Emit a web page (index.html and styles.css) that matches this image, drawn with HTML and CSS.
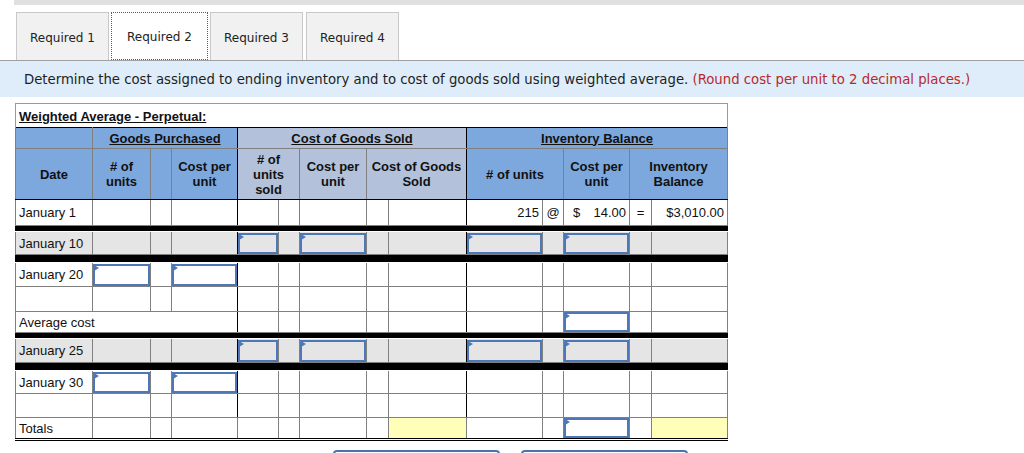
FILE: index.html
```html
<!DOCTYPE html>
<html>
<head>
<meta charset="utf-8">
<link rel="stylesheet" href="styles.css">
</head>
<body>
<div class="topbar"></div>
<div class="tabs">
  <div class="tab">Required 1</div>
  <div class="tab active">Required 2</div>
  <div class="tab">Required 3</div>
  <div class="tab">Required 4</div>
</div>
<div class="instr">Determine the cost assigned to ending inventory and to cost of goods sold using weighted average. <span class="red">(Round cost per unit to 2 decimal places.)</span></div>

<table class="wa">
  <colgroup>
    <col style="width:77px"><col style="width:58px"><col style="width:21px"><col style="width:66px">
    <col style="width:41px"><col style="width:21px"><col style="width:67px"><col style="width:22px"><col style="width:78px">
    <col style="width:76px"><col style="width:21px"><col style="width:66px"><col style="width:22px"><col style="width:76px">
  </colgroup>
  <tr class="title"><td colspan="14"><span>Weighted Average - Perpetual:</span></td></tr>
  <tr class="h1">
    <th class="blue"></th>
    <th class="blue gb" colspan="3"><u>Goods Purchased</u></th>
    <th class="grey gb" colspan="5"><u>Cost of Goods Sold</u></th>
    <th class="blue" colspan="5"><u>Inventory Balance</u></th>
  </tr>
  <tr class="h2">
    <th class="blue">Date</th>
    <th class="blue"># of<br>units</th>
    <th class="blue"></th>
    <th class="blue gb">Cost per<br>unit</th>
    <th class="grey" colspan="2"># of<br>units<br>sold</th>
    <th class="grey">Cost per<br>unit</th>
    <th class="grey gb" colspan="2">Cost of Goods<br>Sold</th>
    <th class="blue" colspan="2"># of units</th>
    <th class="blue">Cost per<br>unit</th>
    <th class="blue" colspan="2">Inventory<br>Balance</th>
  </tr>
  <tr class="r26">
    <td>January 1</td><td></td><td></td><td class="gb"></td>
    <td></td><td></td><td></td><td></td><td class="gb"></td>
    <td class="num">215</td><td class="c">@</td><td class="money"><span>$</span><span>14.00</span></td><td class="c">=</td><td class="num">$3,010.00</td>
  </tr>
  <tr class="sep"><td colspan="14"></td></tr>
  <tr class="r23 gray">
    <td>January 10</td><td></td><td></td><td class="gb"></td>
    <td class="in"><div class="box"></div></td><td></td><td class="in"><div class="box"></div></td><td></td><td class="gb"></td>
    <td class="in"><div class="box"></div></td><td></td><td class="in"><div class="box"></div></td><td></td><td></td>
  </tr>
  <tr class="sep s7"><td colspan="14"></td></tr>
  <tr class="r24">
    <td>January 20</td><td class="in"><div class="box"></div></td><td></td><td class="in gb"><div class="box"></div></td>
    <td></td><td></td><td></td><td></td><td class="gb"></td>
    <td></td><td></td><td></td><td></td><td></td>
  </tr>
  <tr class="r25">
    <td></td><td></td><td></td><td class="gb"></td>
    <td></td><td></td><td></td><td></td><td class="gb"></td>
    <td></td><td></td><td></td><td></td><td></td>
  </tr>
  <tr class="r21">
    <td colspan="4" class="gb">Average cost</td>
    <td></td><td></td><td></td><td></td><td class="gb"></td>
    <td></td><td></td><td class="in"><div class="box"></div></td><td></td><td></td>
  </tr>
  <tr class="sep"><td colspan="14"></td></tr>
  <tr class="r24 gray">
    <td>January 25</td><td></td><td></td><td class="gb"></td>
    <td class="in"><div class="box"></div></td><td></td><td class="in"><div class="box"></div></td><td></td><td class="gb"></td>
    <td class="in"><div class="box"></div></td><td></td><td class="in"><div class="box"></div></td><td></td><td></td>
  </tr>
  <tr class="sep s7"><td colspan="14"></td></tr>
  <tr class="r23">
    <td>January 30</td><td class="in"><div class="box"></div></td><td></td><td class="in gb"><div class="box"></div></td>
    <td></td><td></td><td></td><td></td><td class="gb"></td>
    <td></td><td></td><td></td><td></td><td></td>
  </tr>
  <tr class="r24">
    <td></td><td></td><td></td><td class="gb"></td>
    <td></td><td></td><td></td><td></td><td class="gb"></td>
    <td></td><td></td><td></td><td></td><td></td>
  </tr>
  <tr class="r21 last">
    <td>Totals</td><td></td><td></td><td></td>
    <td></td><td></td><td></td><td></td><td class="yellow"></td>
    <td></td><td></td><td class="in"><div class="box"></div></td><td></td><td class="yellow"></td>
  </tr>
</table>

<div class="buttons">
  <div class="btn"></div>
  <div class="btn"></div>
</div>
</body>
</html>
```

FILE: styles.css
```css
html, body {
  margin: 0;
  padding: 0;
  background: #fff;
}
body {
  font-family: "DejaVu Sans", Verdana, sans-serif;
  color: #222;
  overflow: hidden;
  height: 453px;
}
.topbar {
  margin-left: 14px;
  height: 5px;
  background: #e0e0e0;
}
.tabs {
  display: flex;
  gap: 2px;
  padding-left: 16px;
  margin-top: 7px;
  height: 48px;
}
.tab {
  box-sizing: border-box;
  width: 93px;
  height: 48px;
  padding-top: 2px;
  border: 1px solid #c8c8c8;
  border-bottom: none;
  background: #f1f1f1;
  font-size: 12px;
  display: flex;
  align-items: center;
  justify-content: center;
  color: #222;
}
.tab.active {
  width: 97px;
  background: #fff;
  border: 1px dotted #2d66b8;
  position: relative;
  z-index: 1;
}
.tab:nth-child(4) { margin-left: 1px; }
.instr {
  box-sizing: border-box;
  height: 37px;
  border-top: 1px solid #a0a0a0;
  background: #deedf9;
  padding-left: 24px;
  padding-top: 1px;
  font-size: 13.25px;
  line-height: 36px;
  color: #1e1e1e;
  white-space: nowrap;
}
.red { color: #b8292b; }

.wa {
  margin-left: 15px;
  margin-top: 6px;
  border-collapse: collapse;
  table-layout: fixed;
  width: 713px;
  font-family: "Liberation Sans", Arial, sans-serif;
  font-size: 13px;
  color: #111;
  border: 1px solid #999;
}
.wa td, .wa th {
  border: 1px solid #808080;
  padding: 0 3px;
  overflow: visible;
  white-space: nowrap;
}
.wa .title td {
  height: 21px;
  border: none;
  border-left: 1px solid #999;
  border-right: 1px solid #999;
  font-weight: bold;
  padding: 2px 3px 0;
  vertical-align: middle;
}
.wa .title span { text-decoration: underline; }
.wa th {
  font-weight: bold;
  text-align: center;
  line-height: 15px;
}
.wa .h1 th {
  height: 20px;
  border-top: 1px solid #000;
  padding: 0;
}
.wa .h2 th {
  height: 50px;
  border-bottom: 1px solid #000;
  padding: 0;
}
.wa .blue { background: #7da8de; }
.wa .grey { background: #b3c2da; }
.wa .gb { border-right: 1px solid #000; }
.wa .r26 td { height: 25px; }
.wa .r25 td { height: 24px; }
.wa .r24 td { height: 23px; }
.wa .r23 td { height: 22px; }
.wa .r22 td { height: 21px; }
.wa .r21 td { height: 20px; }
.wa tr.gray td { background: #e5e5e5; }
.wa .sep td {
  height: 5px;
  padding: 0;
  background: #000;
  border: 1px solid #000;
  border-bottom: 1px solid #fff;
}
.wa .sep.s7 td { height: 7px; }
.wa tr.last td { border-bottom: 3px double #000; }
.wa .num { text-align: right; }
.wa .c { text-align: center; padding: 0; }
.wa .money span:first-child { float: left; padding-left: 6px; }
.wa .money { text-align: right; }
.wa .in { padding: 0; }
.wa .yellow { background: #ffffb9; }
.box {
  position: relative;
  box-sizing: border-box;
  height: 21px;
  margin: 0;
  border: 2px solid #4d77b6;
}
.r24 .box { height: 22px; }
.r23 .box { height: 21px; }
.r22 .box { height: 20px; }
.r21 .box { height: 20px; }
.box::before {
  content: "";
  position: absolute;
  left: -1px;
  top: -1px;
  border-top: 3px solid transparent;
  border-bottom: 3px solid transparent;
  border-left: 5px solid #4d77b6;
}
.buttons {
  display: flex;
  gap: 21px;
  margin-left: 333px;
  margin-top: 9px;
}
.btn {
  width: 167px;
  height: 30px;
  border: 2px solid #4a72b0;
  border-radius: 4px;
  box-sizing: border-box;
}
```
